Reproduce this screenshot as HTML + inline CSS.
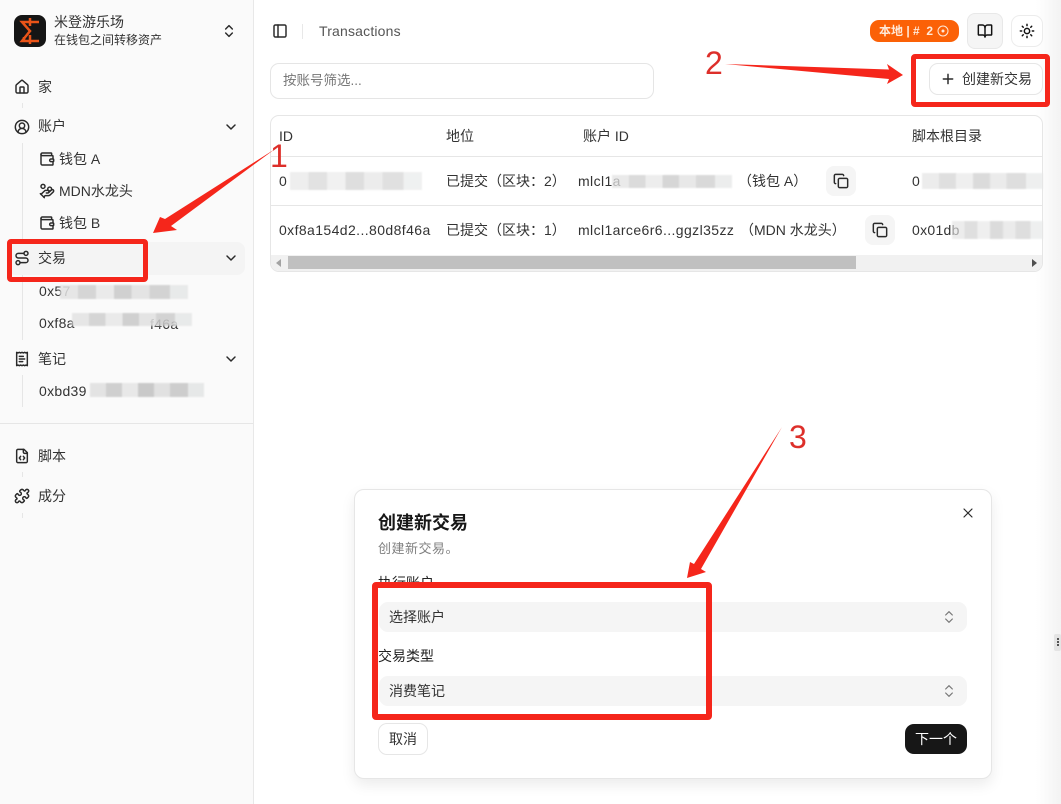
<!DOCTYPE html>
<html lang="zh"><head><meta charset="utf-8"><title>Transactions</title>
<style>
*{box-sizing:border-box}
html,body{margin:0;padding:0;width:1061px;height:804px;overflow:hidden;background:#fff}
body{position:relative;font-family:"Liberation Sans","Noto Sans CJK SC",sans-serif;font-size:14px;color:#333}
.t{position:absolute;line-height:20px;height:20px;white-space:nowrap}
.b{position:absolute}
.i{position:absolute;fill:none;stroke:#2a2a2a;stroke-width:2.2;stroke-linecap:round;stroke-linejoin:round}
.v{position:absolute;width:1px;background:#e6e6e6;left:22px}
.rb{position:absolute;border-style:solid;border-color:#f5261b;border-radius:4px;background:transparent}
.blur{position:absolute;filter:blur(.8px);background:linear-gradient(90deg,#e3e3e3 0 14%,#cfcfcf 14% 28%,#e8e8e8 28% 42%,#c9c9c9 42% 56%,#e1e1e1 56% 70%,#cdcdcd 70% 86%,#e6e8e8 86% 100%)}
.num{position:absolute;color:#dd2f2a;font-size:32px;line-height:36px;font-family:"Liberation Sans",sans-serif}
</style></head><body>
<svg width="0" height="0" style="position:absolute"><defs>
<symbol id="home" viewBox="0 0 24 24"><path d="M15 21v-8a1 1 0 0 0-1-1h-4a1 1 0 0 0-1 1v8"/><path d="M3 10a2 2 0 0 1 .709-1.528l7-5.999a2 2 0 0 1 2.582 0l7 5.999A2 2 0 0 1 21 10v9a2 2 0 0 1-2 2H5a2 2 0 0 1-2-2z"/></symbol>
<symbol id="user" viewBox="0 0 24 24"><path d="M18 20a6 6 0 0 0-12 0"/><circle cx="12" cy="10" r="4"/><circle cx="12" cy="12" r="10"/></symbol>
<symbol id="wallet" viewBox="0 0 24 24"><path d="M19 7V4a1 1 0 0 0-1-1H5a2 2 0 0 0 0 4h15a1 1 0 0 1 1 1v4h-3a2 2 0 0 0 0 4h3a1 1 0 0 0 1-1v-2a1 1 0 0 0-1-1"/><path d="M3 5v14a2 2 0 0 0 2 2h15a1 1 0 0 0 1-1v-4"/></symbol>
<symbol id="coins" viewBox="0 0 24 24"><path d="M11 15h2a2 2 0 1 0 0-4h-3c-.6 0-1.100.2-1.400.6L3 17"/><path d="m7 21 1.600-1.400c.3-.4.8-.6 1.400-.6h4c1.100 0 2.100-.4 2.800-1.200l4.600-4.400a2 2 0 0 0-2.750-2.910l-4.200 3.900"/><path d="m2 16 6 6"/><circle cx="16" cy="9" r="2.900"/><circle cx="6" cy="5" r="3"/></symbol>
<symbol id="route" viewBox="0 0 24 24"><circle cx="6" cy="19" r="3"/><path d="M9 19h8.500a3.500 3.500 0 0 0 0-7h-11a3.500 3.500 0 0 1 0-7H15"/><circle cx="18" cy="5" r="3"/></symbol>
<symbol id="receipt" viewBox="0 0 24 24"><path d="M4 2v20l2-1 2 1 2-1 2 1 2-1 2 1 2-1 2 1V2l-2 1-2-1-2 1-2-1-2 1-2-1-2 1Z"/><path d="M14 8H8"/><path d="M16 12H8"/><path d="M13 16H8"/></symbol>
<symbol id="file" viewBox="0 0 24 24"><path d="M10 12.500 8 15l2 2.500"/><path d="m14 12.500 2 2.500-2 2.500"/><path d="M14 2v4a2 2 0 0 0 2 2h4"/><path d="M15 2H6a2 2 0 0 0-2 2v16a2 2 0 0 0 2 2h12a2 2 0 0 0 2-2V7z"/></symbol>
<symbol id="puzzle" viewBox="0 0 24 24"><path d="M19.439 7.850c-.049.322.059.648.289.878l1.568 1.568c.47.47.706 1.087.706 1.704s-.235 1.233-.706 1.704l-1.611 1.611a.98.98 0 0 1-.837.276c-.47-.07-.802-.48-.968-.925a2.501 2.501 0 1 0-3.214 3.214c.446.166.855.497.925.968a.979.979 0 0 1-.276.837l-1.610 1.610a2.404 2.404 0 0 1-1.705.707 2.402 2.402 0 0 1-1.704-.706l-1.568-1.568a1.026 1.026 0 0 0-.877-.29c-.493.074-.84.504-1.020.968a2.500 2.500 0 1 1-3.237-3.237c.464-.18.894-.527.967-1.020a1.026 1.026 0 0 0-.289-.877l-1.568-1.568A2.402 2.402 0 0 1 1.998 12c0-.617.236-1.234.706-1.704L4.230 8.770c.24-.24.581-.353.917-.303.515.077.877.528 1.073 1.010a2.500 2.500 0 1 0 3.259-3.259c-.482-.196-.933-.558-1.010-1.073-.05-.336.062-.676.303-.917l1.525-1.525A2.402 2.402 0 0 1 12 1.998c.617 0 1.234.236 1.704.706l1.568 1.568c.23.23.556.338.877.29.493-.074.84-.504 1.020-.968a2.500 2.500 0 1 1 3.237 3.237c-.464.18-.894.527-.967 1.020Z"/></symbol>
<symbol id="panel" viewBox="0 0 24 24"><rect x="3" y="3" width="18" height="18" rx="2"/><path d="M9 3v18"/></symbol>
<symbol id="book" viewBox="0 0 24 24"><path d="M12 7v14"/><path d="M3 18a1 1 0 0 1-1-1V4a1 1 0 0 1 1-1h5a4 4 0 0 1 4 4 4 4 0 0 1 4-4h5a1 1 0 0 1 1 1v13a1 1 0 0 1-1 1h-6a3 3 0 0 0-3 3 3 3 0 0 0-3-3z"/></symbol>
<symbol id="sun" viewBox="0 0 24 24"><circle cx="12" cy="12" r="4"/><path d="M12 2v2"/><path d="M12 20v2"/><path d="m4.930 4.930 1.410 1.410"/><path d="m17.660 17.660 1.410 1.410"/><path d="M2 12h2"/><path d="M20 12h2"/><path d="m6.340 17.660-1.410 1.410"/><path d="m19.070 4.930-1.410 1.410"/></symbol>
<symbol id="copy" viewBox="0 0 24 24"><rect x="8" y="8" width="14" height="14" rx="2"/><path d="M4 16c-1.100 0-2-.9-2-2V4c0-1.100.9-2 2-2h10c1.100 0 2 .9 2 2"/></symbol>
<symbol id="updown" viewBox="0 0 24 24"><path d="m7 15 5 5 5-5"/><path d="m7 9 5-5 5 5"/></symbol>
<symbol id="down" viewBox="0 0 24 24"><path d="m6 9 6 6 6-6"/></symbol>
<symbol id="plus" viewBox="0 0 24 24"><path d="M5 12h14"/><path d="M12 5v14"/></symbol>
<symbol id="x" viewBox="0 0 24 24"><path d="M18 6 6 18"/><path d="m6 6 12 12"/></symbol>
</defs></svg>

<!-- right-edge shade -->
<div class="b" style="left:1036px;top:0;width:25px;height:804px;background:linear-gradient(90deg,#fff,#f3f3f3)"></div>
<div class="b" style="left:1054px;top:634px;width:7px;height:17px;background:#e4e4e4;border-radius:2px"></div>
<div class="b" style="left:1057px;top:638px;width:2px;height:9px;background:repeating-linear-gradient(180deg,#555 0 2px,transparent 2px 3px)"></div>

<!-- sidebar -->
<div class="b" style="left:0;top:0;width:254px;height:804px;background:#fafafa;border-right:1px solid #e8e8e8"></div>
<div class="b" style="left:14px;top:15px;width:32px;height:32px;background:#151515;border-radius:8px"></div>
<svg class="b" style="left:14px;top:15px" width="32" height="32" viewBox="0 0 32 32" fill="none" stroke="#ea5418" stroke-width="2.500" stroke-linejoin="miter"><path d="M25 7H8L16 16 8 26H25"/><path d="M16 3V11M16 20V29M10 22V26"/></svg>
<div class="t" style="left:54px;top:12px;color:#333">米登游乐场</div>
<div class="t" style="left:54px;top:30px;font-size:12px">在钱包之间转移资产</div>
<svg class="i" style="left:221px;top:23px" width="16" height="16"><use href="#updown"/></svg>

<svg class="i" style="left:14px;top:79px" width="16" height="16"><use href="#home"/></svg>
<div class="t" style="left:38px;top:77px">家</div>
<div class="v" style="top:103px;height:5px"></div>

<svg class="i" style="left:14px;top:119px" width="16" height="16"><use href="#user"/></svg>
<div class="t" style="left:38px;top:116px">账户</div>
<svg class="i" style="left:223px;top:119px" width="16" height="16"><use href="#down"/></svg>
<div class="v" style="top:143px;height:97px"></div>
<svg class="i" style="left:39px;top:151px" width="16" height="16"><use href="#wallet"/></svg>
<div class="t" style="left:59px;top:149px">钱包 A</div>
<svg class="i" style="left:39px;top:183px" width="16" height="16"><use href="#coins"/></svg>
<div class="t" style="left:59px;top:181px">MDN水龙头</div>
<svg class="i" style="left:39px;top:215px" width="16" height="16"><use href="#wallet"/></svg>
<div class="t" style="left:59px;top:213px">钱包 B</div>

<div class="b" style="left:8px;top:242px;width:237px;height:33px;background:#f4f4f4;border-radius:8px"></div>
<svg class="i" style="left:14px;top:250px" width="16" height="16"><use href="#route"/></svg>
<div class="t" style="left:38px;top:248px">交易</div>
<svg class="i" style="left:223px;top:250px" width="16" height="16"><use href="#down"/></svg>
<div class="v" style="top:275px;height:65px"></div>
<div class="t" style="left:39px;top:281px;letter-spacing:.3px">0x57</div>
<div class="t" style="left:39px;top:313px;letter-spacing:.3px">0xf8a</div>
<div class="t" style="left:150px;top:314px;letter-spacing:.3px">f46a</div>
<div class="blur" style="left:60px;top:285px;width:128px;height:14px;opacity:.85"></div>
<div class="blur" style="left:72px;top:313px;width:120px;height:13px;opacity:.85"></div>

<svg class="i" style="left:14px;top:351px" width="16" height="16"><use href="#receipt"/></svg>
<div class="t" style="left:38px;top:349px">笔记</div>
<svg class="i" style="left:223px;top:351px" width="16" height="16"><use href="#down"/></svg>
<div class="v" style="top:375px;height:32px"></div>
<div class="t" style="left:39px;top:381px;letter-spacing:.3px">0xbd39</div>
<div class="blur" style="left:90px;top:383px;width:114px;height:14px"></div>

<div class="b" style="left:0;top:423px;width:253px;height:1px;background:#e6e6e6"></div>
<svg class="i" style="left:14px;top:448px" width="16" height="16"><use href="#file"/></svg>
<div class="t" style="left:38px;top:446px">脚本</div>
<div class="v" style="top:472px;height:5px"></div>
<svg class="i" style="left:14px;top:488px" width="16" height="16"><use href="#puzzle"/></svg>
<div class="t" style="left:38px;top:486px">成分</div>
<div class="v" style="top:513px;height:5px"></div>

<!-- top bar -->
<svg class="i" style="left:272px;top:23px" width="16" height="16"><use href="#panel"/></svg>
<div class="b" style="left:302px;top:24px;width:1px;height:15px;background:#e8e8e8"></div>
<div class="t" style="left:319px;top:21px;color:#555;letter-spacing:.18px">Transactions</div>
<div class="b" style="left:870px;top:20px;width:89px;height:22px;background:#fb6107;border-radius:9px"></div>
<div class="t" style="left:879px;top:21px;font-size:12px;font-weight:700;color:#ffe9d8">本地 | # &nbsp;2</div>
<svg class="b" style="left:937px;top:25px" width="12" height="12" viewBox="0 0 12 12" fill="none" stroke="#ffe9d8" stroke-width="1"><circle cx="6" cy="6" r="5"/><circle cx="6" cy="6" r="1" fill="#ffe9d8"/></svg>
<div class="b" style="left:967px;top:13px;width:36px;height:36px;background:#f5f5f5;border:1px solid #e8e8e8;border-radius:8px"></div>
<svg class="i" style="left:977px;top:23px;stroke:#111" width="16" height="16"><use href="#book"/></svg>
<div class="b" style="left:1011px;top:15px;width:32px;height:32px;background:#fff;border:1px solid #ececec;border-radius:9px"></div>
<svg class="i" style="left:1019px;top:23px;stroke:#111" width="16" height="16"><use href="#sun"/></svg>

<!-- filter -->
<div class="b" style="left:270px;top:63px;width:384px;height:36px;border:1px solid #e5e5e5;border-radius:9px;background:#fff"></div>
<div class="t" style="left:283px;top:71px;color:#777;font-size:13.500px">按账号筛选...</div>
<div class="b" style="left:929px;top:63px;width:114px;height:32px;border:1px solid #e6e6e6;border-radius:9px;background:#fff"></div>
<svg class="i" style="left:940px;top:71px" width="16" height="16"><use href="#plus"/></svg>
<div class="t" style="left:962px;top:69px">创建新交易</div>

<!-- table -->
<div class="b" style="left:270px;top:115px;width:773px;height:157px;border:1px solid #e6e6e6;border-radius:9px;background:#fff"></div>
<div class="b" style="left:271px;top:156px;width:771px;height:1px;background:#e6e6e6"></div>
<div class="b" style="left:271px;top:205px;width:771px;height:1px;background:#e6e6e6"></div>
<div class="t" style="left:279px;top:126px">ID</div>
<div class="t" style="left:446px;top:126px">地位</div>
<div class="t" style="left:583px;top:126px">账户 ID</div>
<div class="t" style="left:912px;top:126px">脚本根目录</div>

<div class="t" style="left:279px;top:171px">0</div>
<div class="blur" style="left:290px;top:172px;width:132px;height:18px;opacity:.6"></div>
<div class="t" style="left:446px;top:171px">已提交（区块：2）</div>
<div class="t" style="left:578px;top:171px;letter-spacing:.4px">mlcl1a</div>
<div class="blur" style="left:612px;top:175px;width:120px;height:13px;opacity:.75"></div>
<div class="t" style="left:738px;top:171px">（钱包 A）</div>
<div class="b" style="left:826px;top:166px;width:30px;height:30px;background:#f5f5f5;border-radius:8px"></div>
<svg class="i" style="left:833px;top:173px" width="16" height="16"><use href="#copy"/></svg>
<div class="t" style="left:912px;top:171px">0</div>
<div class="blur" style="left:922px;top:173px;width:121px;height:16px;opacity:.65"></div>

<div class="t" style="left:279px;top:220px;letter-spacing:.4px">0xf8a154d2...80d8f46a</div>
<div class="t" style="left:446px;top:220px">已提交（区块：1）</div>
<div class="t" style="left:578px;top:220px;letter-spacing:.4px">mlcl1arce6r6...ggzl35zz</div>
<div class="t" style="left:740px;top:220px">（MDN 水龙头）</div>
<div class="b" style="left:865px;top:215px;width:30px;height:30px;background:#f5f5f5;border-radius:8px"></div>
<svg class="i" style="left:872px;top:222px" width="16" height="16"><use href="#copy"/></svg>
<div class="t" style="left:912px;top:220px;letter-spacing:.3px">0x01db</div>
<div class="blur" style="left:952px;top:221px;width:91px;height:18px;opacity:.65"></div>

<div class="b" style="left:271px;top:255px;width:771px;height:16px;background:#f1f1f1;border-radius:0 0 8px 8px"></div>
<div class="b" style="left:288px;top:256px;width:568px;height:13px;background:#c0c0c0"></div>
<div class="b" style="left:276px;top:259px;width:0;height:0;border-style:solid;border-width:4px 5px 4px 0;border-color:transparent #a3a3a3 transparent transparent"></div>
<div class="b" style="left:1032px;top:259px;width:0;height:0;border-style:solid;border-width:4px 0 4px 5px;border-color:transparent transparent transparent #505050"></div>

<!-- dialog -->
<div class="b" style="left:354px;top:489px;width:638px;height:290px;background:#fff;border:1px solid #e6e6e6;border-radius:10px;box-shadow:0 6px 14px rgba(0,0,0,.08)"></div>
<div class="t" style="left:378px;top:513px;font-size:18px;font-weight:700;color:#171717">创建新交易</div>
<div class="t" style="left:378px;top:539px;color:#808080;font-size:13px;letter-spacing:.5px">创建新交易。</div>
<svg class="i" style="left:960px;top:505px;stroke-width:1.800" width="16" height="16"><use href="#x"/></svg>
<div class="t" style="left:378px;top:573px;height:9px;overflow:hidden;color:#222">执行账户</div>
<div class="b" style="left:379px;top:602px;width:588px;height:30px;background:#f5f5f5;border-radius:9px"></div>
<div class="t" style="left:389px;top:607px">选择账户</div>
<svg class="i" style="left:941px;top:609px;stroke:#777;stroke-width:1.800" width="16" height="16"><use href="#updown"/></svg>
<div class="t" style="left:378px;top:646px;color:#222">交易类型</div>
<div class="b" style="left:379px;top:676px;width:588px;height:30px;background:#f5f5f5;border-radius:9px"></div>
<div class="t" style="left:389px;top:681px">消费笔记</div>
<svg class="i" style="left:941px;top:683px;stroke:#777;stroke-width:1.800" width="16" height="16"><use href="#updown"/></svg>
<div class="b" style="left:378px;top:723px;width:50px;height:32px;border:1px solid #e6e6e6;border-radius:9px;background:#fff"></div>
<div class="t" style="left:389px;top:729px">取消</div>
<div class="b" style="left:905px;top:724px;width:62px;height:30px;background:#171717;border-radius:9px"></div>
<div class="t" style="left:915px;top:729px;color:#fff">下一个</div>

<!-- annotations -->
<div class="rb" style="left:7px;top:239px;width:141px;height:43px;border-width:5px"></div>
<div class="rb" style="left:911px;top:54px;width:139px;height:53px;border-width:5px"></div>
<div class="rb" style="left:372px;top:582px;width:340px;height:138px;border-width:6px"></div>
<svg class="b" style="left:0;top:0" width="1061" height="804" fill="#f5261b">
<polygon points="275,149 171,226 177,230 153,233 160,217 165,219"/>
<polygon points="725,64 889,69.500 887,64 903,75 887,84 889,79"/>
<polygon points="782,427 701,569 706,572 687,578 690,562 694,564"/>
</svg>
<div class="num" style="left:270px;top:138px">1</div>
<div class="num" style="left:705px;top:45px">2</div>
<div class="num" style="left:789px;top:419px">3</div>
</body></html>
